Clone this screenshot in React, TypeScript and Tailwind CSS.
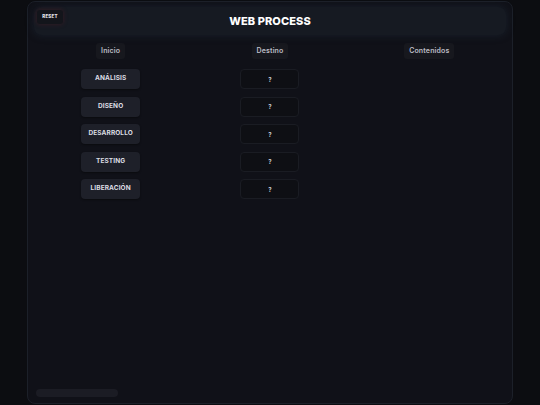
import React from "react";

const stages = ["ANÁLISIS", "DISEÑO", "DESARROLLO", "TESTING", "LIBERACIÓN"];

function ColumnLabel({ text }: { text: string }) {
  return (
    <div className="flex justify-center">
      <div className="h-[16px] px-[5px] flex items-center rounded-[3px] bg-[#17181e] text-[7px] font-semibold text-[#bcbdc5] tracking-[0.15px]">
        {text}
      </div>
    </div>
  );
}

export default function App() {
  return (
    <div
      className="w-[540px] h-[405px] bg-[#0c0d11] overflow-hidden"
      style={{ fontFamily: "Inter, 'Noto Sans', sans-serif" }}
    >
      <div className="ml-[27px] mt-[1px] w-[486px] h-[403px] rounded-[8px] border border-[#1c2029] bg-[#101118] flex flex-col px-[3px] pt-[5px] pb-[6px]">
        {/* title bar */}
        <div className="relative mx-[3px] h-[28px] rounded-[8px] bg-[#161a22] shadow-[0_0_8px_rgba(40,60,80,0.35)] flex items-center justify-center">
          <button className="absolute left-[3px] top-[3px] h-[14px] w-[26px] rounded-[3px] bg-[#13151b] shadow-[0_0_5px_rgba(120,30,40,0.35)] flex items-center justify-center text-[4.5px] font-extrabold text-[#e6e6ea] tracking-[0.2px]">
            RESET
          </button>
          <div className="text-[11px] font-extrabold text-white tracking-[0.1px] mt-[1px]">
            WEB PROCESS
          </div>
        </div>

        {/* columns */}
        <div className="grid grid-cols-3 mt-[8px]">
          <div className="flex flex-col">
            <ColumnLabel text="Inicio" />
            <div className="flex flex-col items-center gap-[7.5px] mt-[10px]">
              {stages.map((s) => (
                <div
                  key={s}
                  className="w-[59px] h-[20px] rounded-[4px] bg-[#1e2029] shadow-[0_1px_2px_rgba(0,0,0,0.4)] flex items-center justify-center text-[6.5px] font-bold text-[#dcdde3] tracking-[0.1px]"
                >
                  {s}
                </div>
              ))}
            </div>
          </div>
          <div className="flex flex-col">
            <ColumnLabel text="Destino" />
            <div className="flex flex-col items-center gap-[7.5px] mt-[10px]">
              {stages.map((s) => (
                <div
                  key={s}
                  className="w-[59px] h-[20px] rounded-[4px] bg-[#0e0f14] border border-[#1a1c23] flex items-center justify-center text-[6px] font-bold text-[#c9cad1]"
                >
                  ?
                </div>
              ))}
            </div>
          </div>
          <div className="flex flex-col">
            <ColumnLabel text="Contenidos" />
          </div>
        </div>

        {/* horizontal scroll thumb */}
        <div className="mt-auto ml-[5px] w-[82px] h-[8px] rounded-full bg-[#1b1c24]" />
      </div>
    </div>
  );
}
